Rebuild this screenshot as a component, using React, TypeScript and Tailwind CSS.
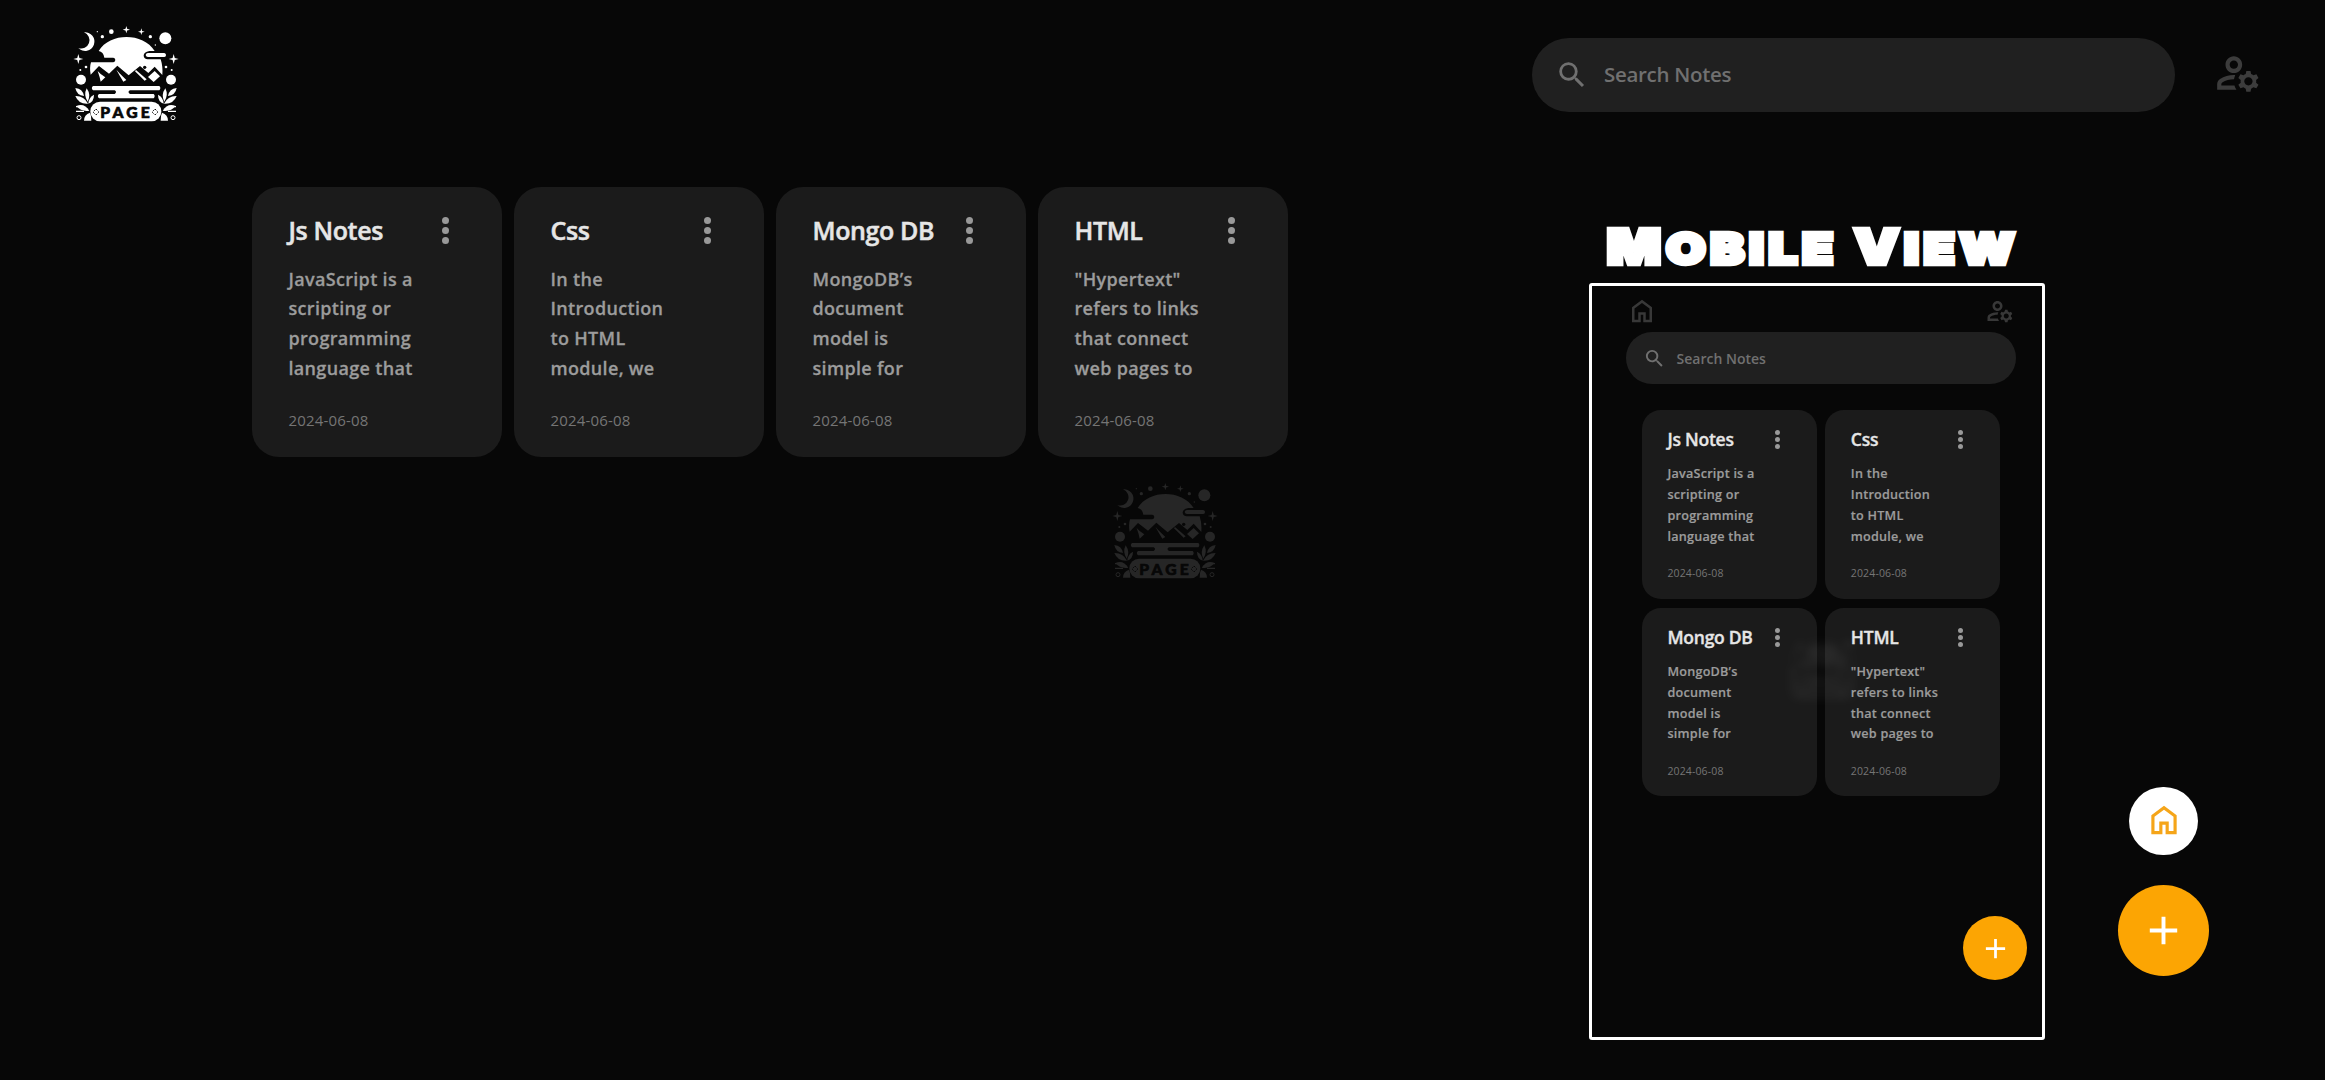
import React from "react";
import { MdAdd, MdOutlineManageAccounts, MdSearch } from "react-icons/md";

type Note = { title: string; lines: string[]; date: string };

const notes: Note[] = [
  { title: "Js Notes", lines: ["JavaScript is a", "scripting or", "programming", "language that"], date: "2024-06-08" },
  { title: "Css", lines: ["In the", "Introduction", "to HTML", "module, we"], date: "2024-06-08" },
  { title: "Mongo DB", lines: ["MongoDB’s", "document", "model is", "simple for"], date: "2024-06-08" },
  { title: "HTML", lines: ['"Hypertext"', "refers to links", "that connect", "web pages to"], date: "2024-06-08" },
];

function HomeIcon({ className }: { className: string }) {
  return (
    <svg viewBox="0 0 24 24" fill="currentColor" className={className}>
      <path d="M6 19h3v-6h6v6h3v-9l-6-4.5L6 10v9zm-2 2V9l8-6 8 6v12h-7v-6h-2v6H4z" />
    </svg>
  );
}

function Star({ x, y, r }: { x: number; y: number; r: number }) {
  return (
    <path
      transform={`translate(${x} ${y}) scale(${r})`}
      d="M0-1L.22-.22L1 0L.22.22L0 1L-.22.22L-1 0L-.22-.22Z"
    />
  );
}

/* One laurel branch; the right one is the same shape mirrored. */
function Branch() {
  return (
    <g>
      <path d="M46 219q22 2 26 24q-22-2-26-24z" />
      <path d="M46 243q26-1 38 23q-28 2-38-23z" />
      <path d="M49 273q24-10 39 14q-24 4-39-14z" />
      <path d="M80 220q-10 20 3 40q11-20-3-40z" />
      <path d="M102 239q-16 8-17 27q17-6 17-27z" />
      <path d="M72 317q0-18 18-24q4 8 4 24z" />
      <path d="M48 287h24v4H48zM48 273h6v4h-6z" />
      <circle cx="57" cy="308" r="6" fill="none" stroke="currentColor" strokeWidth="3" />
      <circle cx="63" cy="194" r="15" />
      <circle cx="78" cy="156" r="4" />
      <circle cx="61" cy="165" r="3" />
      <Star x={55} y={132} r={15} />
    </g>
  );
}

function Logo({ className }: { className: string }) {
  return (
    <svg viewBox="0 0 390 360" fill="currentColor" className={className}>
      <path d="M72 52A28 28 0 1 1 55 99A24 24 0 1 0 72 52z" />
      <circle cx="316" cy="70" r="18" />
      <circle cx="154" cy="50" r="7" />
      <circle cx="127" cy="65" r="5" />
      <circle cx="271" cy="65" r="5" />
      <circle cx="112" cy="50" r="2" />
      <circle cx="286" cy="90" r="2" />
      <Star x={199} y={44} r={11} />
      <Star x={244} y={50} r={10} />
      <path d="M116 108C150 52 249 52 284 108L268 108Q251 112 251 122Q252 132 263 133H302Q309 154 307 180L284 155L265 174L240 153L206 181L172 152L147 176L117 153L92 179Q88 158 93 142H160Q166 141 166 135Q166 129 160 128H133Q130 110 116 108z" />
      <path d="M263 114H313Q318 115 318 120Q318 126 313 126H263Q257 125 257 120Q257 115 263 114z" />
      <circle cx="254" cy="157" r="5" fill="#070707" />
      <path d="M113 168L122 177L136 187L122 200L119 187z" />
      <path d="M169 164L180 176L199 195L190 200L180 184z" />
      <path d="M228 165L260 193L254 197L225 169z" />
      <path d="M284 168L300 184L281 201L264 186z" />
      <path d="M99 213H298Q304 219 298 226H210Q201 231 210 237H281Q287 243 281 250H117Q110 243 117 237H164Q172 231 164 226H99Q92 219 99 213z" />
      <rect x="91" y="260" width="213" height="59" rx="29" />
      <Branch />
      <g transform="translate(396 0) scale(-1 1)">
        <Branch />
      </g>
      <text x="121" y="308" textLength="148" fill="#070707" stroke="#070707" strokeWidth="2" className="[font-family:Lato,sans-serif] text-[47px] font-black">
        PAGE
      </text>
      <g fill="none" stroke="#070707" strokeWidth="3" strokeDasharray="4 3">
        <path d="M108 282l9 9l-9 9l-9-9z" />
        <path d="M285 282l9 9l-9 9l-9-9z" />
      </g>
    </svg>
  );
}

/* Every length is in em, so the font size set by the parent scales the card. */
function NoteCard({ note }: { note: Note }) {
  return (
    <article className="h-[26.95em] w-[24.95em] rounded-[2.7em] bg-[#1b1b1b] pt-[2.83em] pl-[3.65em]">
      <div className="flex h-[3em] items-center">
        <h2 className="w-[6em] whitespace-nowrap text-[2.5em] leading-[1.2] font-semibold tracking-[-0.015em] text-[#e6e6e6] [-webkit-text-stroke:0.02em_#e6e6e6]">{note.title}</h2>
        <div className="flex w-[1.4em] flex-col items-center gap-[0.3em]">
          <span className="size-[0.7em] rounded-full bg-[#999999]" />
          <span className="size-[0.7em] rounded-full bg-[#999999]" />
          <span className="size-[0.7em] rounded-full bg-[#999999]" />
        </div>
      </div>
      <div className="mt-[1.95em]">
        {note.lines.map((line) => (
          <p key={line} className="whitespace-nowrap text-[1.8em] leading-[1.65] font-semibold tracking-[0.018em] text-[#9c9c9c] [-webkit-text-stroke:0.015em_#9c9c9c]">
            {line}
          </p>
        ))}
      </div>
      <p className="mt-[1.75em] text-[1.5em] leading-[1.333] tracking-[0.012em] text-[#757575]">{note.date}</p>
    </article>
  );
}

function MobileView() {
  return (
    <section className="flex flex-col items-center">
      <h1 className="h-[70px] translate-x-[-3px] scale-x-[1.185] whitespace-nowrap [font-family:Inter,sans-serif] text-[48px] leading-[67px] font-black tracking-[4px] text-white uppercase [-webkit-text-stroke:4.5px_white]">
        M<span className="text-[43px]">obile</span> V<span className="text-[43px]">iew</span>
      </h1>
      <div className="relative h-[757px] w-[456px] rounded-[3px] border-[3px] border-white">
        <div className="ml-[35px] flex h-[46px] w-[390px] items-center justify-between pt-[3px] pr-[2px] text-[#383838]">
          <HomeIcon className="size-[30px]" />
          <MdOutlineManageAccounts className="size-[30px]" />
        </div>
        <div className="ml-[34px] flex h-[52px] w-[390px] items-center rounded-full bg-[#202020] pl-[17px] text-[#707070]">
          <MdSearch className="size-[23px]" />
          <span className="ml-[11px] text-[14px] font-semibold">Search Notes</span>
        </div>
        <div className="mt-[25.6px] ml-[50.4px] grid w-max grid-cols-2 gap-x-[8.5px] gap-y-[9px] text-[7.01px]">
          {notes.map((n) => (
            <NoteCard key={n.title} note={n} />
          ))}
        </div>
        <div className="absolute top-[343px] left-[187px] w-[86px] text-white opacity-[0.06] blur-[4px]">
          <Logo className="w-full" />
        </div>
        <button className="absolute top-[630px] left-[371.5px] grid size-[64px] place-items-center rounded-full bg-[#fca503] text-white">
          <MdAdd className="size-[33px]" />
        </button>
      </div>
    </section>
  );
}

export default function App() {
  return (
    <div className="relative h-[1080px] w-[2325px] overflow-hidden bg-[#070707] font-['Open_Sans','Noto_Sans',sans-serif]">
      <header className="flex h-[187px] items-start pt-[15px] pl-[60px]">
        <Logo className="h-[120px] w-[130px] text-white" />
        <div className="mt-[22.5px] ml-auto flex h-[74px] w-[643px] items-center rounded-full bg-[#202020] pl-[23px] text-[#707070]">
          <MdSearch className="size-[34px]" />
          <span className="ml-[15px] text-[20.5px] font-semibold tracking-[-0.015em]">Search Notes</span>
        </div>
        <MdOutlineManageAccounts className="mt-[33px] mr-[62px] ml-[38px] size-[50px] text-[#3c3c3c]" />
      </header>
      <main className="flex">
        <div className="ml-[252px] grid h-max grid-cols-4 gap-[12.5px] text-[10px]">
          {notes.map((n) => (
            <NoteCard key={n.title} note={n} />
          ))}
        </div>
        <div className="mt-[26px] ml-[301px]">
          <MobileView />
        </div>
      </main>
      <Logo className="absolute top-[472px] left-[1098.5px] h-[120px] w-[130px] text-[#262626]" />
      <div className="absolute top-[787px] left-[2118px] flex w-[91px] flex-col items-center gap-[30px]">
        <button className="grid h-[68px] w-[69px] place-items-center rounded-full bg-white text-[#f5a519]">
          <HomeIcon className="-mt-[2px] size-[38px]" />
        </button>
        <button className="grid size-[91px] place-items-center rounded-full bg-[#fca503] text-white">
          <MdAdd className="size-[47px]" />
        </button>
      </div>
    </div>
  );
}
